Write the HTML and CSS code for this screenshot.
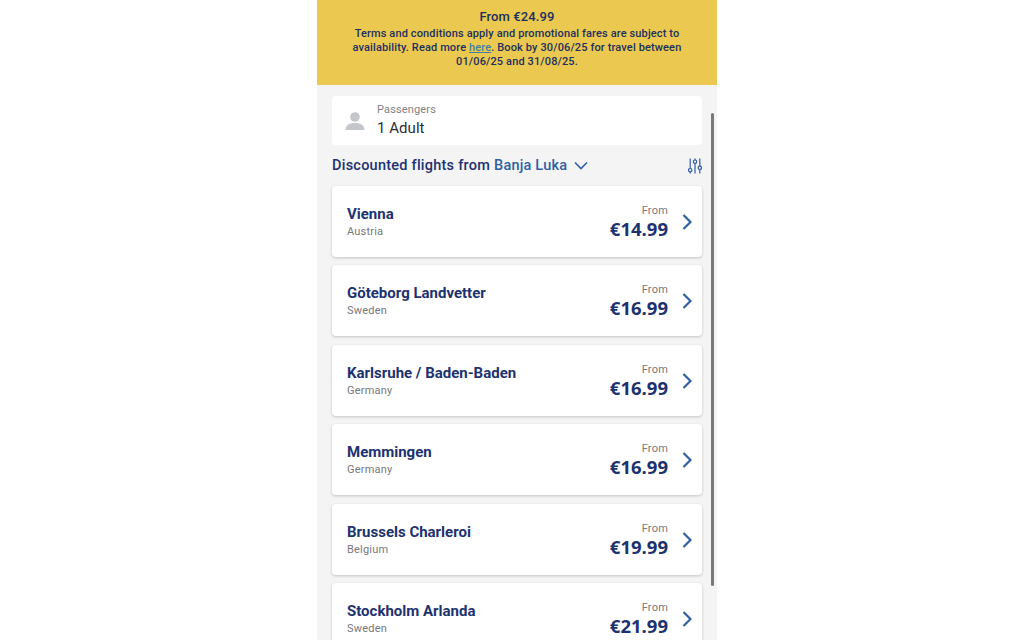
FILE: index.html
```html
<!DOCTYPE html>
<html lang="en">
  <head>
    <meta charset="utf-8" />
    <title>Discounted flights</title>
    <link rel="stylesheet" href="styles.css">
  </head>

  <body>
    <div class="phone">
      <div class="promo">
        <p class="promo-title">From €24.99</p>
        <p class="promo-text">Terms and conditions apply and promotional fares are subject to availability. Read more <a href="#">here</a>. Book by 30/06/25 for travel between 01/06/25 and 31/08/25.</p>
      </div>

      <div class="content">
        <div class="passengers">
          <svg class="person-icon" width="20" height="18" viewBox="0 0 20 18">
            <circle cx="10" cy="5" r="4.8" fill="#c3c7cc" />
            <path d="M0.5 18 C0.5 13.5 4 11 10 11 C16 11 19.5 13.5 19.5 18 Z" fill="#c3c7cc" />
          </svg>
          <div>
            <div class="passengers-label">Passengers</div>
            <div class="passengers-value">1 Adult</div>
          </div>
        </div>

        <div class="heading">
          <span class="heading-text">Discounted flights from</span>
          <span class="heading-city">Banja Luka</span>
          <svg class="heading-chevron" width="14" height="9" viewBox="0 0 14 9">
            <path d="M1 1.5 L7 7.5 L13 1.5" fill="none" stroke="#2f5fa5" stroke-width="1.6" />
          </svg>
          <svg class="filter-icon" width="14" height="16" viewBox="0 0 14 16">
            <g fill="none" stroke="#2f5fa5" stroke-width="1.2">
              <path d="M2.2 0.5 V10.5 M2.2 14 V15.5 M7 0.5 V2 M7 5.5 V15.5 M11.8 0.5 V8 M11.8 11.5 V15.5" />
              <circle cx="2.2" cy="12.2" r="1.7" />
              <circle cx="7" cy="3.7" r="1.7" />
              <circle cx="11.8" cy="9.8" r="1.7" />
            </g>
          </svg>
        </div>

        <div class="flight-list">
          <div class="flight">
            <div class="flight-place">
              <div class="flight-city">Vienna</div>
              <div class="flight-country">Austria</div>
            </div>
            <div class="flight-fare">
              <div class="flight-from">From</div>
              <div class="flight-price">€14.99</div>
            </div>
            <svg class="flight-chevron" width="10" height="16" viewBox="0 0 10 16"><path d="M1.5 1 L8.5 8 L1.5 15" /></svg>
          </div>
          <div class="flight">
            <div class="flight-place">
              <div class="flight-city">Göteborg Landvetter</div>
              <div class="flight-country">Sweden</div>
            </div>
            <div class="flight-fare">
              <div class="flight-from">From</div>
              <div class="flight-price">€16.99</div>
            </div>
            <svg class="flight-chevron" width="10" height="16" viewBox="0 0 10 16"><path d="M1.5 1 L8.5 8 L1.5 15" /></svg>
          </div>
          <div class="flight">
            <div class="flight-place">
              <div class="flight-city">Karlsruhe / Baden-Baden</div>
              <div class="flight-country">Germany</div>
            </div>
            <div class="flight-fare">
              <div class="flight-from">From</div>
              <div class="flight-price">€16.99</div>
            </div>
            <svg class="flight-chevron" width="10" height="16" viewBox="0 0 10 16"><path d="M1.5 1 L8.5 8 L1.5 15" /></svg>
          </div>
          <div class="flight">
            <div class="flight-place">
              <div class="flight-city">Memmingen</div>
              <div class="flight-country">Germany</div>
            </div>
            <div class="flight-fare">
              <div class="flight-from">From</div>
              <div class="flight-price">€16.99</div>
            </div>
            <svg class="flight-chevron" width="10" height="16" viewBox="0 0 10 16"><path d="M1.5 1 L8.5 8 L1.5 15" /></svg>
          </div>
          <div class="flight">
            <div class="flight-place">
              <div class="flight-city">Brussels Charleroi</div>
              <div class="flight-country">Belgium</div>
            </div>
            <div class="flight-fare">
              <div class="flight-from">From</div>
              <div class="flight-price">€19.99</div>
            </div>
            <svg class="flight-chevron" width="10" height="16" viewBox="0 0 10 16"><path d="M1.5 1 L8.5 8 L1.5 15" /></svg>
          </div>
          <div class="flight">
            <div class="flight-place">
              <div class="flight-city">Stockholm Arlanda</div>
              <div class="flight-country">Sweden</div>
            </div>
            <div class="flight-fare">
              <div class="flight-from">From</div>
              <div class="flight-price">€21.99</div>
            </div>
            <svg class="flight-chevron" width="10" height="16" viewBox="0 0 10 16"><path d="M1.5 1 L8.5 8 L1.5 15" /></svg>
          </div>
        </div>
      </div>

      <div class="scrollbar"></div>
    </div>
  </body>
</html>
```

FILE: styles.css
```css
html, body {
  margin: 0;
  padding: 0;
  height: 100%;
  overflow: hidden;
  background: #ffffff;
  font-family: Roboto, "Liberation Sans", sans-serif;
}

.phone {
  position: relative;
  width: 400px;
  height: 640px;
  margin-left: 317px;
  overflow: hidden;
  background: #f4f4f4;
}

.promo {
  box-sizing: border-box;
  height: 85px;
  padding: 9px 30px 0;
  background: #ebc950;
  color: #1d2f5e;
  text-align: center;
}

.promo-title {
  margin: 0;
  font-size: 13px;
  font-weight: 500;
  line-height: 15px;
  letter-spacing: 0.1px;
}

.promo-text {
  margin: 3px 0 0;
  font-size: 11px;
  font-weight: 500;
  line-height: 14px;
  letter-spacing: 0.13px;
}

.promo-text a {
  color: #3f7fa8;
}

.content {
  padding: 11px 15px 0;
}

.passengers {
  display: flex;
  align-items: center;
  box-sizing: border-box;
  height: 49px;
  padding-left: 13px;
  gap: 12px;
  background: #ffffff;
  border-radius: 4px;
}

.person-icon {
  margin-top: 1px;
}

.passengers-label {
  margin-top: -2px;
  font-size: 11px;
  line-height: 13px;
  color: #808285;
  letter-spacing: 0.15px;
}

.passengers-value {
  margin-top: 3px;
  font-size: 15px;
  line-height: 18px;
  color: #2b2f36;
  letter-spacing: 0.05px;
}

.heading {
  display: flex;
  align-items: center;
  height: 41px;
}

.heading-text {
  font-size: 14.5px;
  font-weight: 500;
  color: #1d3270;
  letter-spacing: 0.24px;
}

.heading-city {
  margin-left: 4px;
  font-size: 14.5px;
  font-weight: 500;
  color: #2f5fa5;
  letter-spacing: 0.2px;
}

.heading-chevron {
  margin-left: 7px;
}

.filter-icon {
  margin-left: auto;
}

.flight-list {
  display: flex;
  flex-direction: column;
  gap: 8.4px;
}

.flight {
  display: flex;
  align-items: center;
  flex-shrink: 0;
  box-sizing: border-box;
  height: 71px;
  padding: 0 10px 0 15px;
  background: #ffffff;
  border-radius: 4px;
  box-shadow: 0 1px 3px rgba(0, 0, 0, 0.2);
}

.flight-place {
  flex: 1;
  margin-top: 1px;
}

.flight-city {
  font-size: 15px;
  font-weight: 700;
  line-height: 18px;
  color: #1d3270;
}

.flight-country {
  margin-top: 2px;
  font-size: 11px;
  line-height: 14px;
  color: #77787a;
  letter-spacing: 0.2px;
}

.flight-fare {
  margin-top: 2px;
  text-align: right;
}

.flight-from {
  font-size: 11px;
  line-height: 13px;
  color: #77787a;
  letter-spacing: 0.2px;
}

.flight-price {
  font-family: "Open Sans", sans-serif;
  font-size: 18.5px;
  font-weight: 700;
  line-height: 24px;
  color: #1d3270;
}

.flight-chevron {
  margin-left: 14px;
  margin-top: 1px;
}

.flight-chevron path {
  fill: none;
  stroke: #2f5fa5;
  stroke-width: 2.2;
}

.scrollbar {
  position: absolute;
  top: 113px;
  left: 394px;
  width: 3px;
  height: 473px;
  background: #77797c;
  border-radius: 2px;
}
```
